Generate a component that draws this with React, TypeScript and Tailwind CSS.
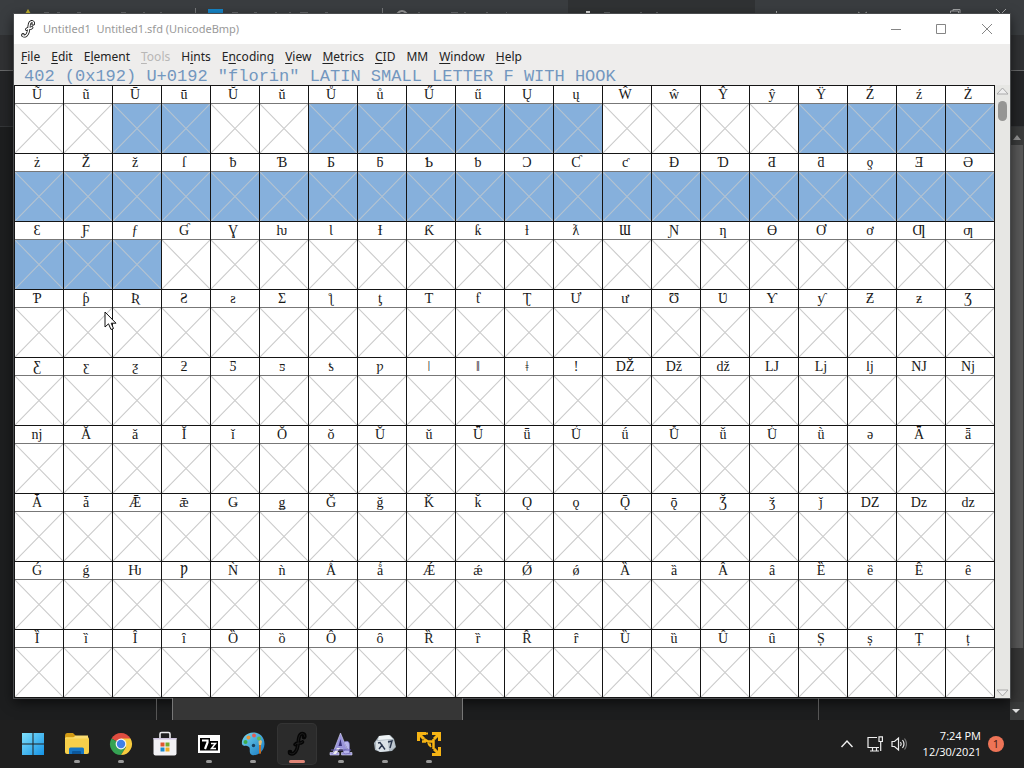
import React from "react";

const FIRST_CODE = 0x168;
const COLUMNS = 20;
const ROWS = 9;

const codes = Array.from({ length: COLUMNS * ROWS }, (_, i) => FIRST_CODE + i);

function isSelected(index: number) {
  if (index >= 20) return index <= 42;
  return index === 2 || index === 3 || (index >= 6 && index <= 11) || index >= 16;
}

const menus = [
  { before: "", key: "F", after: "ile" },
  { before: "", key: "E", after: "dit" },
  { before: "E", key: "l", after: "ement" },
  { before: "", key: "T", after: "ools", disabled: true },
  { before: "H", key: "i", after: "nts" },
  { before: "E", key: "n", after: "coding" },
  { before: "", key: "V", after: "iew" },
  { before: "", key: "M", after: "etrics" },
  { before: "", key: "C", after: "ID" },
  { before: "MM", key: "", after: "" },
  { before: "", key: "W", after: "indow" },
  { before: "", key: "H", after: "elp" },
];

function FLogo({ dark }: { dark?: boolean }) {
  const d =
    "M15.500 4.500c.2-2-2.200-2.600-3.500-.8C10.500 6 11.300 10 10 13.500 9 16.300 7 18 4.800 16.600M8.600 10.400c1.200-1.800 3.400-.2 5.300-1.800";
  return (
    <svg viewBox="0 0 20 20" className="h-full w-full" fill="none" strokeLinecap="round" aria-hidden="true">
      <path d={d} stroke={dark ? "#050505" : "#111"} strokeWidth={dark ? 2.6 : 3} strokeDasharray={dark ? "none" : "1.400 .5"} strokeLinejoin="round" />
      <circle cx="15" cy="5" r="1.700" fill={dark ? "#050505" : "#111"} />
      <circle cx="5" cy="15.800" r="1.700" fill={dark ? "#050505" : "#111"} />
      <path d={d} stroke={dark ? "#2c2c2c" : "#fff"} strokeWidth={dark ? 0.4 : 1.4} />
      {!dark && <circle cx="15" cy="5" r=".7" fill="#fff" />}
      {!dark && <circle cx="5" cy="15.800" r=".7" fill="#fff" />}
    </svg>
  );
}

function WindowsIcon() {
  return (
    <svg viewBox="0 0 24 24" className="size-6" aria-hidden="true">
      <defs>
        <linearGradient id="win" x1="0" y1="0" x2="1" y2="1">
          <stop offset="0" stopColor="#7fe0fb" />
          <stop offset="1" stopColor="#1593e6" />
        </linearGradient>
      </defs>
      <path fill="url(#win)" d="M1 1h10.500v10.500H1zM12.500 1H23v10.500H12.500zM1 12.500h10.500V23H1zM12.500 12.500H23V23H12.500z" />
    </svg>
  );
}

function FolderIcon() {
  return (
    <svg viewBox="0 0 26 24" className="h-6 w-[26px]" aria-hidden="true">
      <path d="M1 3.500Q1 1 3 1h6l2.500 2.500V8H1z" fill="#d29a14" />
      <path d="M2 5h21q2 0 2 2v13q0 2-2 2H3q-2 0-2-2V6z" fill="#f7cf4a" />
      <path d="M1 6h8l2.500-2.500H24v3H1z" fill="#fbdc70" />
      <path d="M5 22v-5q0-1.500 1.500-1.500h12q1.500 0 1.500 1.500v5z" fill="#1676c4" />
      <path d="M8 22v-2q0-1 1-1h7q1 0 1 1v2z" fill="#0c579b" />
    </svg>
  );
}

function ChromeIcon() {
  return (
    <svg viewBox="0 0 24 24" className="size-6" aria-hidden="true">
      <path d="M12 12 2.500 6.500A11 11 0 0 1 21.530 6.500z" fill="#df4d40" />
      <path d="M12 12H12L2.470 6.500A11 11 0 0 0 12 23l5-8z" fill="#35a253" />
      <path d="M12 12V6.500h9.530A11 11 0 0 1 12 23l5-8z" fill="#f7cb3e" />
      <circle cx="12" cy="12" r="5.400" fill="#f4f4f4" />
      <circle cx="12" cy="12" r="4.200" fill="#3f7fe8" />
    </svg>
  );
}

function StoreIcon() {
  return (
    <svg viewBox="0 0 24 26" className="h-[26px] w-6" aria-hidden="true">
      <path d="M7 7V3q0-1.500 1.500-1.500h7Q17 1.500 17 3v4" fill="none" stroke="#e9e9ec" strokeWidth="1.600" />
      <path d="M.5 7h23v15.500q0 2-2 2h-19q-2 0-2-2z" fill="#f3f2f5" />
      <path d="M.5 7h23v1.500H.5z" fill="#cfc4df" />
      <path d="M7.500 11.500h4v4h-4z" fill="#e0552f" />
      <path d="M12.500 11.500h4v4h-4z" fill="#77aa2c" />
      <path d="M7.500 16.500h4v4h-4z" fill="#1d8bcd" />
      <path d="M12.500 16.500h4v4h-4z" fill="#f0ae22" />
    </svg>
  );
}

function SevenZipIcon() {
  return (
    <svg viewBox="0 0 24 20" className="h-5 w-6" aria-hidden="true">
      <path d="M1 1h22v18H1z" fill="#fff" />
      <path d="M3 4h10v3h8v9.500H3z" fill="#000" />
      <path d="M5 6.500h5.500v2L8 15" fill="none" stroke="#fff" strokeWidth="2.200" />
      <path d="M14 9.500h4.500l-4 5h4.500" fill="none" stroke="#fff" strokeWidth="1.500" />
    </svg>
  );
}

function PaintIcon() {
  return (
    <svg viewBox="0 0 26 26" className="size-[26px]" aria-hidden="true">
      <defs>
        <linearGradient id="paint" x1="0" y1="0" x2="1" y2="1">
          <stop offset="0" stopColor="#79d8ee" />
          <stop offset="1" stopColor="#1679c3" />
        </linearGradient>
      </defs>
      <path d="M14 1.500C6 1 1 8 2 13c1 3 5 1 7 3s-1 6 3 8c4 1 12-2 12.500-11C24.500 6 20 2 14 1.500z" fill="url(#paint)" />
      <circle cx="5.500" cy="11" r="2" fill="#3eac49" />
      <circle cx="8.500" cy="6.500" r="2" fill="#e8963b" />
      <circle cx="14" cy="4.500" r="1.900" fill="#e45c55" />
      <circle cx="19" cy="7.500" r="1.900" fill="#64b94b" />
      <circle cx="13.500" cy="14.500" r="1.700" fill="#173f5c" />
      <path d="M18.500 10.500q2.500-3 3.500 0l-1 4h-2z" fill="#e6bc72" />
      <path d="M19 14h2v8q-1 2-2 0z" fill="#c46d26" />
    </svg>
  );
}

function LetterAIcon() {
  return (
    <svg viewBox="0 0 24 24" className="size-6" aria-hidden="true">
      <path d="m11.500 1 8 19.500H23V23H12.500v-2.500h3L14 17H9l-1.500 3.500H10V23H1v-2.500h3z" fill="#9993da" stroke="#d8d6f7" strokeWidth=".6" />
      <path d="M11.500 7 9.500 14H13z" fill="#363078" />
      <path d="M15 10c5-2 5.500 1 5.500 4v7.500h-2c-5 2-6-4 0-4.500" fill="#b7b4ec" stroke="#716bb5" strokeWidth=".7" />
      <path d="m4 22 4-6h3l-4 6z" fill="#eee" />
      <path d="M2 18h20" stroke="#6259ae" strokeWidth="1" />
    </svg>
  );
}

function CubeIcon() {
  return (
    <svg viewBox="0 0 24 20" className="h-5 w-6" aria-hidden="true">
      <path d="m6 2 11-1 4 4 2 8-4 4-12 1-5-2-1-7z" fill="#aab5be" />
      <path d="m6 2 10-1 4 4-15 1z" fill="#eef3f5" />
      <path d="m3 7 12-1 1 11-9 1-4-3z" fill="#dae1e6" />
      <path d="m16 6 5 1 1 6-5 3z" fill="#c0c9d0" />
      <path d="m5 9 2-.5 5 7M9.500 10.500 6 15M15 8l4-1-2 7" fill="none" stroke="#28344b" strokeWidth="1.400" />
    </svg>
  );
}

function ArrowsIcon() {
  return (
    <svg viewBox="0 0 26 26" className="size-[26px]" fill="none" stroke="#f6b414" strokeWidth="3" aria-hidden="true">
      <path d="M2.500 10V2.500H10M3 3l5 5" />
      <path d="M16 2.500h7.500V10M23 3l-5 5" />
      <path d="M23.500 16v7.500H16M23 23l-5-5" />
      <path d="M6 10.500h4M8 8l4 2.500h5M17.500 8v10" strokeWidth="2.500" />
      <path d="m12 12 3 4M9 2.500h3M15 13.500h-3" strokeWidth="2" />
    </svg>
  );
}

const apps = [
  { name: "Start", icon: <WindowsIcon />, running: false },
  { name: "File Explorer", icon: <FolderIcon />, running: true },
  { name: "Chrome", icon: <ChromeIcon />, running: true },
  { name: "Store", icon: <StoreIcon />, running: false },
  { name: "7-Zip", icon: <SevenZipIcon />, running: true },
  { name: "Paint", icon: <PaintIcon />, running: true },
  { name: "FontForge", icon: <span className="size-7"><FLogo dark /></span>, running: true, active: true },
  { name: "Font editor", icon: <LetterAIcon />, running: true },
  { name: "Glyph viewer", icon: <CubeIcon />, running: true },
  { name: "Resizer", icon: <ArrowsIcon />, running: true },
];

function GlyphCell({ code, selected }: { code: number; selected: boolean }) {
  return (
    <button type="button" aria-pressed={selected} className="block min-w-0 border-r border-b border-[#151515]">
      <span className="flex h-[18px] items-center justify-center border-b border-[#777] bg-white pr-1 text-sm leading-[18px] text-[#181818]">
        {String.fromCodePoint(code)}
      </span>
      <svg
        viewBox="0 0 48 49"
        preserveAspectRatio="none"
        className={selected ? "block h-[49px] w-full bg-[#86b0dc]" : "block h-[49px] w-full bg-white"}
        aria-hidden="true"
      >
        <path d="M0 0 48 49M48 0 0 49" stroke={selected ? "#b5c3d0" : "#cbcbcb"} strokeWidth="1.100" />
      </svg>
    </button>
  );
}

function Backdrop() {
  return (
    <div className="absolute inset-0 flex flex-col bg-[#1d1e1f]" aria-hidden="true">
      <div className="flex h-[35px] shrink-0 bg-[#3a3d40]">
        <svg viewBox="0 0 1024 14" className="h-[14px] w-full" preserveAspectRatio="none" fill="none">
          <path d="M568 0h187v14H568z" fill="#303234" />
          <path d="m28 9-3 5h6z" fill="#c5b62b" />
          <path d="M208 9h15v5h-15z" fill="#1687ca" />
          <path d="M195.500 8v6M382.500 8v6" stroke="#77797b" />
          <path d="M397 14q5-6 10 0" stroke="#999" strokeWidth="2" />
          <path d="M586 11h4v3h-4z" fill="#ddd" />
          <path d="M44 13h5m8 0h3m17 0h4m40 0h5m17 0h2m15 0h2M232 13h6m16 0h3m18 0h2m12 0h2m9 0h8m17 0h3M418 13h2m31 0h7m6 0h2m20 0h2m18 0h1M604 13h6m30 0h2m14 0h2" stroke="#8d9092" />
          <path d="M776.500 11v3M858 12l3 2M867 12l-3 2M950.500 14v-3h8v3M953 11V9.500h7V14M996 9l5 5m5-5-5 5" stroke="#a3a5a6" />
        </svg>
      </div>
      <div className="h-9 shrink-0 border-b border-[#68696a] bg-[#303133]" />
      <div className="h-14 shrink-0 border-b border-[#343638] bg-[#242527]" />
      <div className="flex flex-1 justify-end">
        <div className="flex w-[14px] flex-col items-center justify-between bg-[#3a3b3b]">
          <svg viewBox="0 0 14 18" className="h-[18px] w-full"><path d="m3 13 4-5 4 5z" fill="#929292" /></svg>
          <div className="w-3 flex-1 bg-[#585858]" />
          <div className="h-[54px] w-full bg-[#363636]" />
          <svg viewBox="0 0 14 18" className="h-[18px] w-full"><path d="m2 7 4 4 4-4z" fill="#e0e0e0" /></svg>
        </div>
      </div>
    </div>
  );
}

function FontWindow() {
  return (
    <section className="relative bg-[#eeedec] shadow-[0_0_0_1px_#4a4c4e,0_4px_12px_#000000aa]">
      <header className="flex h-[30px] items-center justify-between bg-white pl-1 text-[#999]">
        <div className="flex items-center gap-[5px]">
          <span className="size-5"><FLogo /></span>
          <h1 className="font-['Noto_Sans',sans-serif] text-[11px] whitespace-pre">Untitled1  Untitled1.sfd (UnicodeBmp)</h1>
        </div>
        <div className="flex text-[#858585]">
          <button type="button" aria-label="Minimize" className="flex w-[45px] justify-center">
            <svg viewBox="0 0 12 12" className="size-3" stroke="currentColor"><path d="M1 6.500h10" /></svg>
          </button>
          <button type="button" aria-label="Maximize" className="flex w-[45px] justify-center">
            <svg viewBox="0 0 12 12" className="size-3" stroke="currentColor" fill="none"><path d="M1.500 1.500h9v9h-9z" /></svg>
          </button>
          <button type="button" aria-label="Close" className="flex w-[47px] justify-center">
            <svg viewBox="0 0 12 12" className="size-3" stroke="currentColor"><path d="m1 1 10 10M11 1 1 11" /></svg>
          </button>
        </div>
      </header>
      <nav className="flex h-[25px] items-center gap-[11px] pl-[7px] font-['Noto_Sans',sans-serif] text-xs text-[#222]">
        {menus.map((m) => (
          <button key={m.before + m.key + m.after} type="button" disabled={m.disabled} className="disabled:text-[#b8b7b6]">
            {m.before}
            <span className="underline underline-offset-2">{m.key}</span>
            {m.after}
          </button>
        ))}
      </nav>
      <p className="h-4 pl-[10px] font-['Liberation_Mono',monospace] text-[17px] leading-4 whitespace-nowrap text-[#7397bf]">
        402 (0x192) U+0192 "florin" LATIN SMALL LETTER F WITH HOOK
      </p>
      <div className="flex">
        <div className="grid flex-1 grid-cols-[repeat(20,minmax(0,1fr))] border-t border-l border-[#151515] font-['Liberation_Serif','DejaVu_Serif',serif]">
          {codes.map((code, i) => (
            <GlyphCell key={code} code={code} selected={isSelected(i)} />
          ))}
        </div>
        <div className="flex w-[15px] flex-col items-center justify-between bg-[#e7e7e4]">
          <div className="flex flex-col items-center gap-[6px] pt-[2px]">
            <svg viewBox="0 0 13 8" className="h-2 w-[13px]" fill="#eee" stroke="#aaa"><path d="m1 7 5.500-6L12 7z" /></svg>
            <div className="h-5 w-[9px] rounded-full bg-[#969694]" />
          </div>
          <svg viewBox="0 0 13 8" className="mb-px h-2 w-[13px]" fill="#eee" stroke="#aaa"><path d="m1 1 5.500 6L12 1z" /></svg>
        </div>
      </div>
    </section>
  );
}

function Taskbar() {
  return (
    <footer className="relative flex h-12 items-center justify-between bg-[#1f1f1f] pr-5 pl-[14px] font-['Open_Sans',sans-serif] text-white">
      <nav className="flex gap-[6px]">
        {apps.map((app) => (
          <button
            key={app.name}
            type="button"
            aria-label={app.name}
            className={
              app.active
                ? "relative flex h-10 w-[38px] items-center justify-center rounded bg-[#2b2b2b] ring-1 ring-[#343434]"
                : "relative flex h-10 w-[38px] items-center justify-center"
            }
          >
            {app.icon}
            {app.running && (
              <span
                className={
                  app.active
                    ? "absolute bottom-px h-[3px] w-4 rounded-full bg-[#df8577]"
                    : "absolute bottom-px h-[3px] w-[6px] rounded-full bg-[#999]"
                }
              />
            )}
          </button>
        ))}
      </nav>
      <div className="flex items-center gap-2">
        <button type="button" aria-label="Show hidden icons" className="mr-[5px]">
          <svg viewBox="0 0 14 14" className="size-[14px]" fill="none" stroke="#eee" strokeWidth="1.400"><path d="m1.500 10 5.500-6 5.500 6" /></svg>
        </button>
        <button type="button" aria-label="Network">
          <svg viewBox="0 0 16 16" className="size-4" fill="none" stroke="#eee" strokeWidth="1.200">
            <path d="M10 1.500H1v10h11M3 15h9M5.500 12v3M9.500 12v3M12 .8h3.400v4.700H12zM13.700 5.500V15" />
          </svg>
        </button>
        <button type="button" aria-label="Volume">
          <svg viewBox="0 0 16 16" className="size-4" fill="none" stroke="#eee" strokeWidth="1.200">
            <path d="M1 5.500h2.500l4-3.500v12l-4-3.500H1zM9.500 6q1.500 2 0 4M11.500 4q3 4 0 8" />
            <path d="M13.500 2.500q4 5.500 0 11" stroke="#777" />
          </svg>
        </button>
        <time className="ml-2 text-right text-[11px] leading-4">
          <span className="block">7:24 PM</span>
          <span className="block">12/30/2021</span>
        </time>
        <span className="-ml-px flex size-4 items-center justify-center rounded-full bg-[#ee7457] text-[11px] text-[#3b1712]">1</span>
      </div>
    </footer>
  );
}

export default function App() {
  return (
    <div className="flex min-h-screen flex-col overflow-hidden bg-[#1f1f1f]">
      <main className="relative flex-1 px-[14px] pt-[14px]">
        <Backdrop />
        <FontWindow />
        <div className="relative flex h-[22px]" aria-hidden="true">
          <div className="w-[143px] border-r border-[#555]" />
          <div className="ml-[15px] w-[291px] border-x border-[#777] bg-[#363636]" />
          <div className="w-[356px] border-r border-[#555]" />
        </div>
        <svg viewBox="0 0 13 20" className="absolute top-[311px] left-[104px] h-5 w-[13px]" aria-hidden="true">
          <path d="M1 1v15l3.500-3.200L7 18.500l2.500-1-2.300-5.300H12z" fill="#fff" stroke="#111" />
        </svg>
      </main>
      <Taskbar />
    </div>
  );
}
